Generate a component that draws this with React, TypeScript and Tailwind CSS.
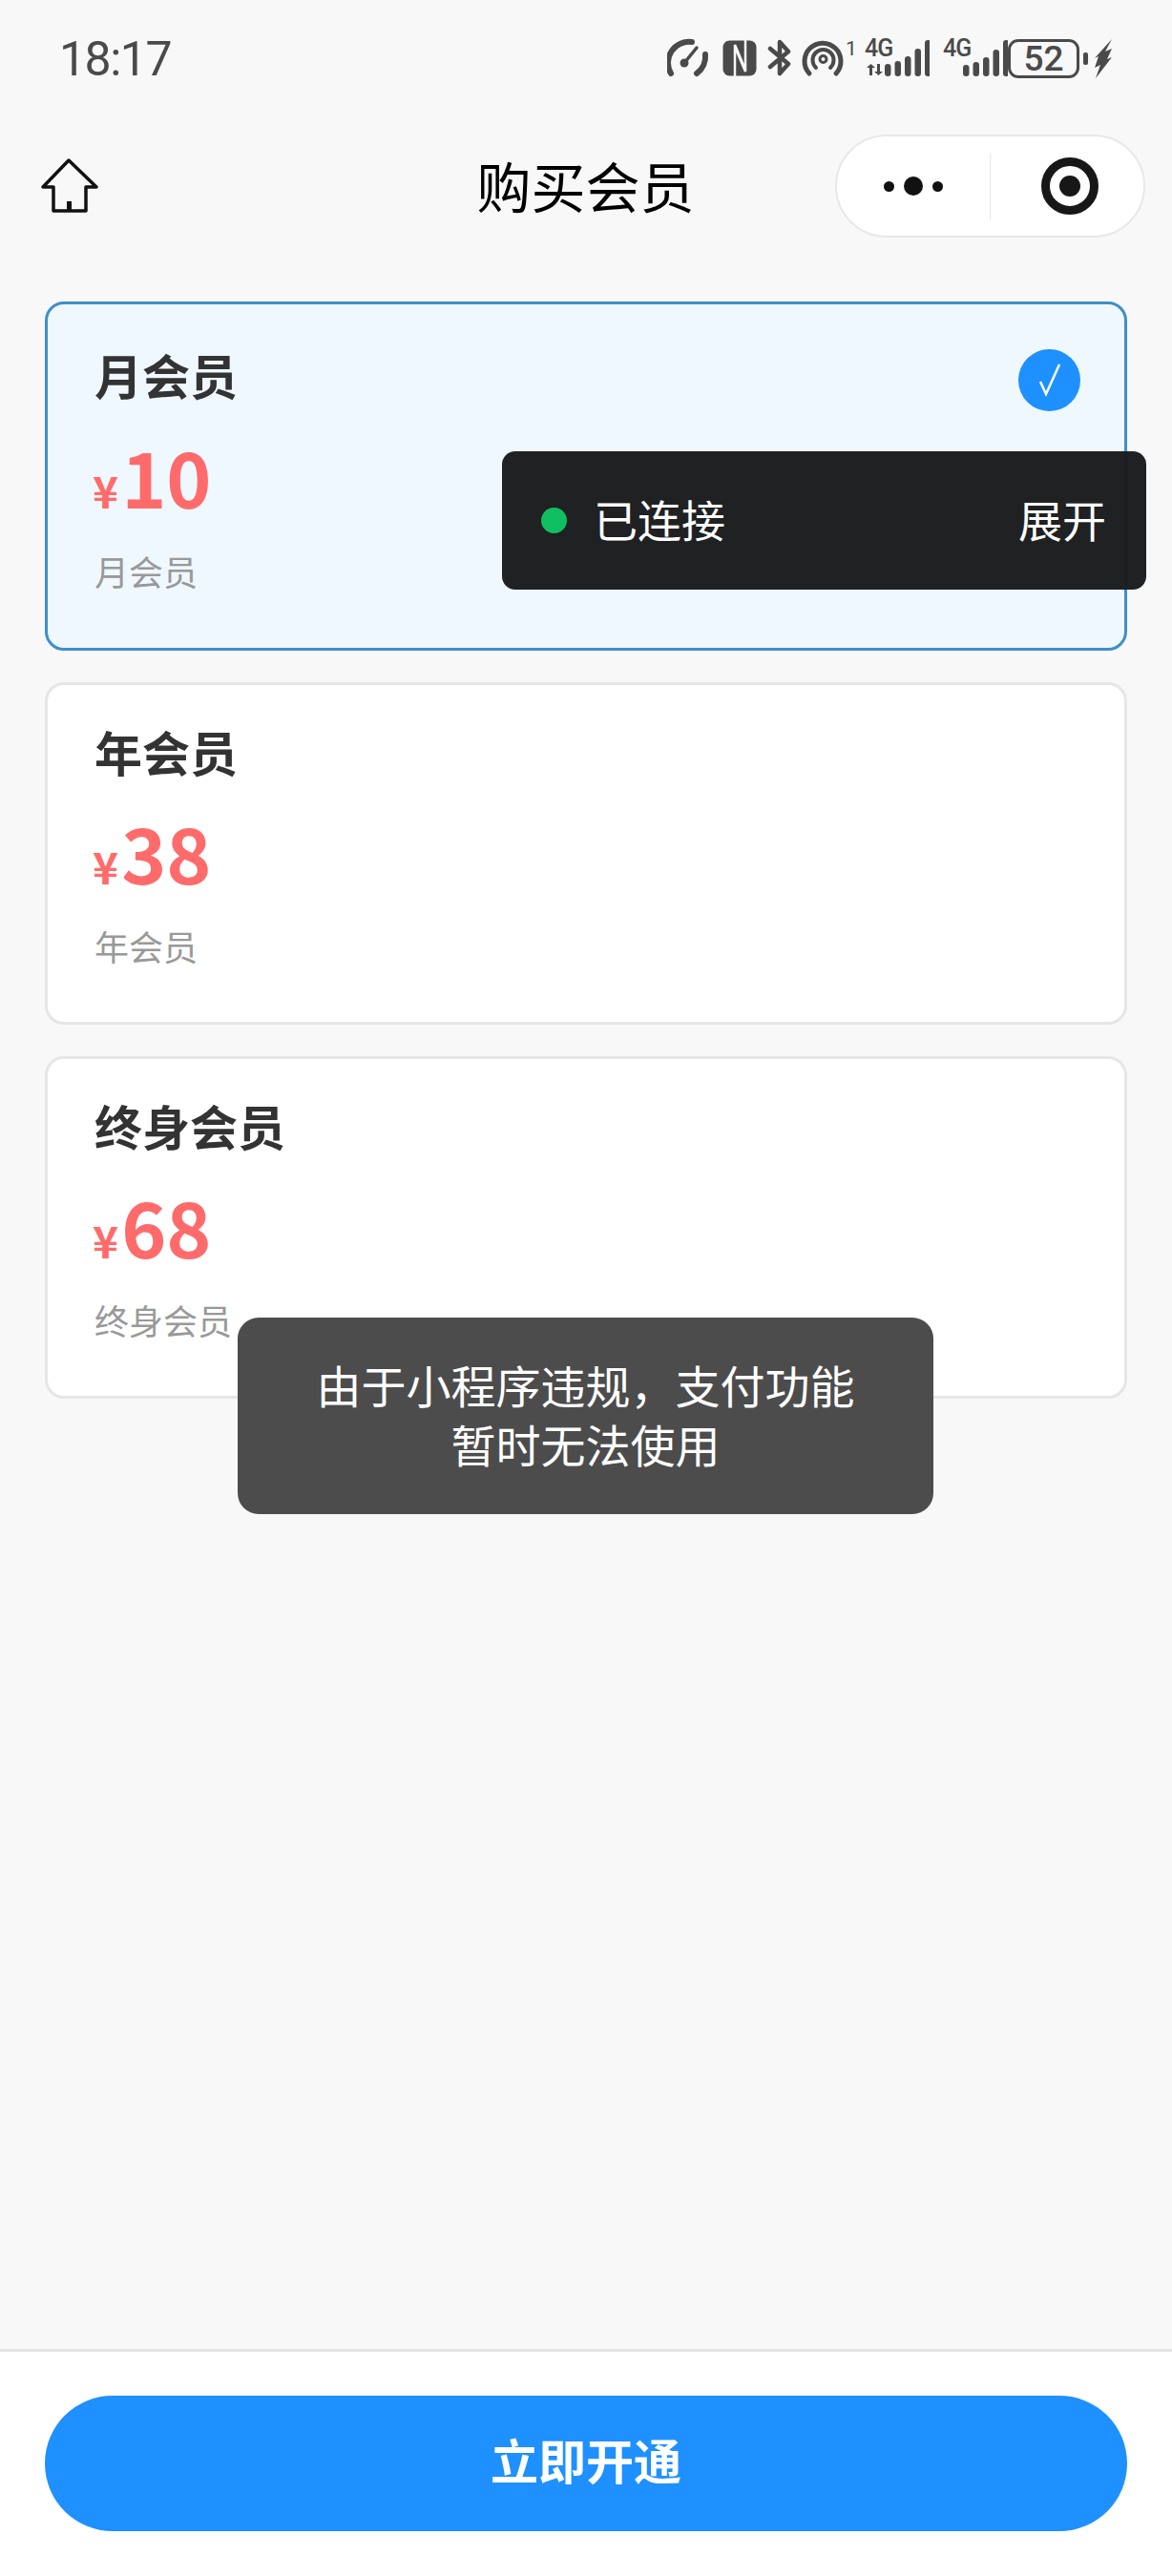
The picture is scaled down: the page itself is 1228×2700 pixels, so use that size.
const plans = [
  { name: '月会员', price: '10', selected: true },
  { name: '年会员', price: '38', selected: false },
  { name: '终身会员', price: '68', selected: false },
]

function Speedo() {
  return (
    <svg width="46" height="42" viewBox="12 11 46 42" fill="none" stroke="#4a4a4a" strokeWidth="6" strokeLinecap="round">
      <path d="M16 48 A 22 22 0 0 1 38 15" />
      <path d="M52 28 A 22 22 0 0 1 43 48" />
      <path d="M30 37 L43 21" strokeWidth="3.500" />
      <circle cx="30" cy="37" r="4.500" fill="#4a4a4a" stroke="none" />
    </svg>
  )
}

function Nfc() {
  return (
    <svg width="36" height="38" viewBox="66 13 36 38">
      <rect x="66.500" y="13.500" width="35" height="37" rx="7" fill="#4a4a4a" />
      <path d="M79 51 V18 L90 44 M90 13 V46 L79 20" fill="none" stroke="#f8f8f8" strokeWidth="2.500" />
    </svg>
  )
}

function Bluetooth() {
  return (
    <svg width="26" height="40" viewBox="114 12 26 40" fill="none" stroke="#4a4a4a" strokeWidth="4.500" strokeLinejoin="round" strokeLinecap="round">
      <path d="M117 22 L136 38 L127 48 V15 L136 25 L117 41" />
    </svg>
  )
}

function Hotspot() {
  return (
    <svg width="46" height="41" viewBox="150 11 46 41" fill="none" stroke="#4a4a4a" strokeLinecap="round">
      <path d="M158 47 A 19 19 0 1 1 186 47" strokeWidth="5" />
      <path d="M165 41 A 11 11 0 1 1 180 41" strokeWidth="4" />
      <circle cx="172.500" cy="32" r="3.500" strokeWidth="3" />
    </svg>
  )
}

function Signal({ heights, arrows }: { heights: number[]; arrows?: boolean }) {
  return (
    <div className="relative h-[40px] w-[68px]">
      <span className="absolute left-0 top-[-4px] text-[25px] font-medium leading-[28px] tracking-[-1px] text-[#4a4a4a] [font-family:Roboto,sans-serif]">
        4G
      </span>
      <svg className="absolute left-0 top-0" width="68" height="40" viewBox="0 0 68 40" fill="#4a4a4a">
        {arrows && (
          <path d="M5 38 V30 H2 L6.500 26 L11 30 H8 V38 Z M13 26 H16 V34 H19 L14.500 38 L10 34 H13 Z" />
        )}
        {heights.map((h, i) => (
          <rect key={i} x={21 + i * 10.500} y={39 - h} width="6.500" height={h} rx="3.200" />
        ))}
      </svg>
    </div>
  )
}

function Battery() {
  return (
    <div className="flex items-center">
      <div className="flex h-[41px] w-[75px] items-center justify-center rounded-[11px] border-[3px] border-[#4a4a4a] text-[37px] font-medium leading-none text-[#4a4a4a] [font-family:Roboto,sans-serif]">
        52
      </div>
      <div className="ml-[4px] h-[13px] w-[5px] rounded-[2px] bg-[#4a4a4a]" />
      <svg className="ml-[7px]" width="18" height="41" viewBox="0 0 18 41" fill="#4a4a4a">
        <path d="M18 0 L11 13 L18 10 L13 21 L18 19 L1 41 L6 27 L0 30 L4 18 L0 20 Z" />
      </svg>
    </div>
  )
}

function StatusBar() {
  return (
    <div className="flex h-[141px] items-start justify-between pl-[62px] pr-[63px] pt-[40px]">
      <span className="text-[50px] leading-[44px] tracking-[-1.500px] text-[#4a4a4a] [font-family:Roboto,sans-serif]">
        18:17
      </span>
      <div className="flex h-[42px] items-center">
        <Speedo />
        <div className="ml-[12px]"><Nfc /></div>
        <div className="ml-[11px]"><Bluetooth /></div>
        <div className="ml-[10px]"><Hotspot /></div>
        <span className="mb-[20px] w-[9px] text-[21px] leading-[20px] text-[#4a4a4a] [font-family:Roboto,sans-serif]">
          1
        </span>
        <div className="ml-[11px]"><Signal heights={[13, 16, 21, 29, 38]} arrows /></div>
        <div className="ml-[14px]"><Signal heights={[12, 15, 20, 28, 38]} /></div>
        <div><Battery /></div>
      </div>
    </div>
  )
}

function NavBar() {
  return (
    <div className="grid h-[108px] grid-cols-[1fr_auto_1fr] items-center pl-[42px] pr-[28px]">
      <svg width="62" height="60" viewBox="0 0 62 60" fill="none" stroke="#111" strokeWidth="3.500" strokeLinejoin="round">
        <path d="M30 3 L3 31 H14 V56 H48 V31 H59 Z" />
        <rect x="28" y="46" width="5" height="10" fill="#111" stroke="none" />
      </svg>
      <h1 className="mb-[3px] mr-[15px] text-[57px] font-normal leading-none text-black">购买会员</h1>
      <div className="flex h-[108px] w-[325px] items-center justify-self-end rounded-full border-2 border-[#e8e8e8] bg-white">
        <div className="flex flex-1 items-center justify-center gap-[10px]">
          <span className="h-[11px] w-[11px] rounded-full bg-[#111]" />
          <span className="h-[20px] w-[20px] rounded-full bg-[#111]" />
          <span className="h-[11px] w-[11px] rounded-full bg-[#111]" />
        </div>
        <div className="h-[69px] w-[1px] bg-[#e6e6e6]" />
        <div className="flex w-[160px] items-center justify-center pl-[5px]">
          <div className="flex h-[60px] w-[60px] items-center justify-center rounded-full border-[9px] border-[#171717]">
            <span className="h-[22px] w-[22px] rounded-full bg-[#171717]" />
          </div>
        </div>
      </div>
    </div>
  )
}

function PlanCard({ name, price, selected }: { name: string; price: string; selected: boolean }) {
  return (
    <div
      className={
        selected
          ? 'rounded-[20px] border-[3px] border-[#3f8fc8] bg-[#eff8ff] pb-[54px] pl-[49px] pr-[46px] pt-[40px]'
          : 'rounded-[20px] border-[3px] border-[#e6e6e6] bg-white pb-[53px] pl-[49px] pr-[46px] pt-[40px]'
      }
    >
      <div className={selected ? 'flex h-[65px] items-center justify-between' : 'flex h-[58px] items-center justify-between'}>
        <span className="text-[50px] font-bold leading-none text-[#333]">{name}</span>
        {selected && (
          <span className="mt-[14px] flex h-[65px] w-[65px] items-center justify-center rounded-full bg-[#1e90ff]">
            <svg width="65" height="65" viewBox="0 0 65 65" fill="none" stroke="#fff" strokeWidth="2.500">
              <path d="M23 34 L29 47 L43 16" />
            </svg>
          </span>
        )}
      </div>
      <div className={selected ? 'mt-[34px] flex h-[80px] items-baseline text-[#ff6b6b]' : 'mt-[36px] flex h-[80px] items-baseline text-[#ff6b6b]'}>
        <span className="-ml-[2px] text-[46px] font-bold leading-none">¥</span>
        <span className="ml-[3px] text-[80px] font-bold leading-none">{price}</span>
      </div>
      <p className={selected ? 'mt-[33px] text-[36px] leading-[54px] text-[#999]' : 'mt-[32px] text-[36px] leading-[54px] text-[#999]'}>{name}</p>
    </div>
  )
}

export default function App() {
  return (
    <div className="relative flex h-[2700px] flex-col overflow-hidden bg-[#f8f8f8] [font-family:'Noto_Sans_CJK_SC','Noto_Sans',sans-serif]">
      <StatusBar />
      <NavBar />

      {/* Plans */}
      <div className="flex flex-1 flex-col gap-[33px] pl-[47px] pr-[47px] pt-[67px]">
        {plans.map((p) => (
          <PlanCard key={p.name} {...p} />
        ))}
      </div>

      {/* Footer */}
      <div className="border-t-[3px] border-[#e5e5e5] bg-white px-[47px] pb-[47px] pt-[46px]">
        <button className="flex h-[142px] w-full items-center justify-center rounded-full bg-[#1e90ff] pb-[10px] text-[50px] font-bold text-white">
          立即开通
        </button>
      </div>

      {/* Connection pill */}
      <div className="absolute left-[526px] top-[473px] flex h-[145px] w-[675px] items-center rounded-[14px] bg-[#181a1c]/[0.97] pb-[6px] pl-[41px] pr-[42px] text-[46px] leading-none text-white">
        <span className="mt-[6px] h-[27px] w-[27px] rounded-full bg-[#10c060]" />
        <span className="ml-[28px] flex-1">已连接</span>
        <span>展开</span>
      </div>

      {/* Toast */}
      <div className="absolute left-[249px] top-[1381px] flex h-[206px] w-[729px] items-center justify-center rounded-[22px] bg-[#4c4c4c] px-[80px] pb-[4px] text-center text-[47px] leading-[62px] text-white">
        <p>
          由于小程序违规{'\uFF0C'}支付功能暂时无法使用
        </p>
      </div>
    </div>
  )
}
